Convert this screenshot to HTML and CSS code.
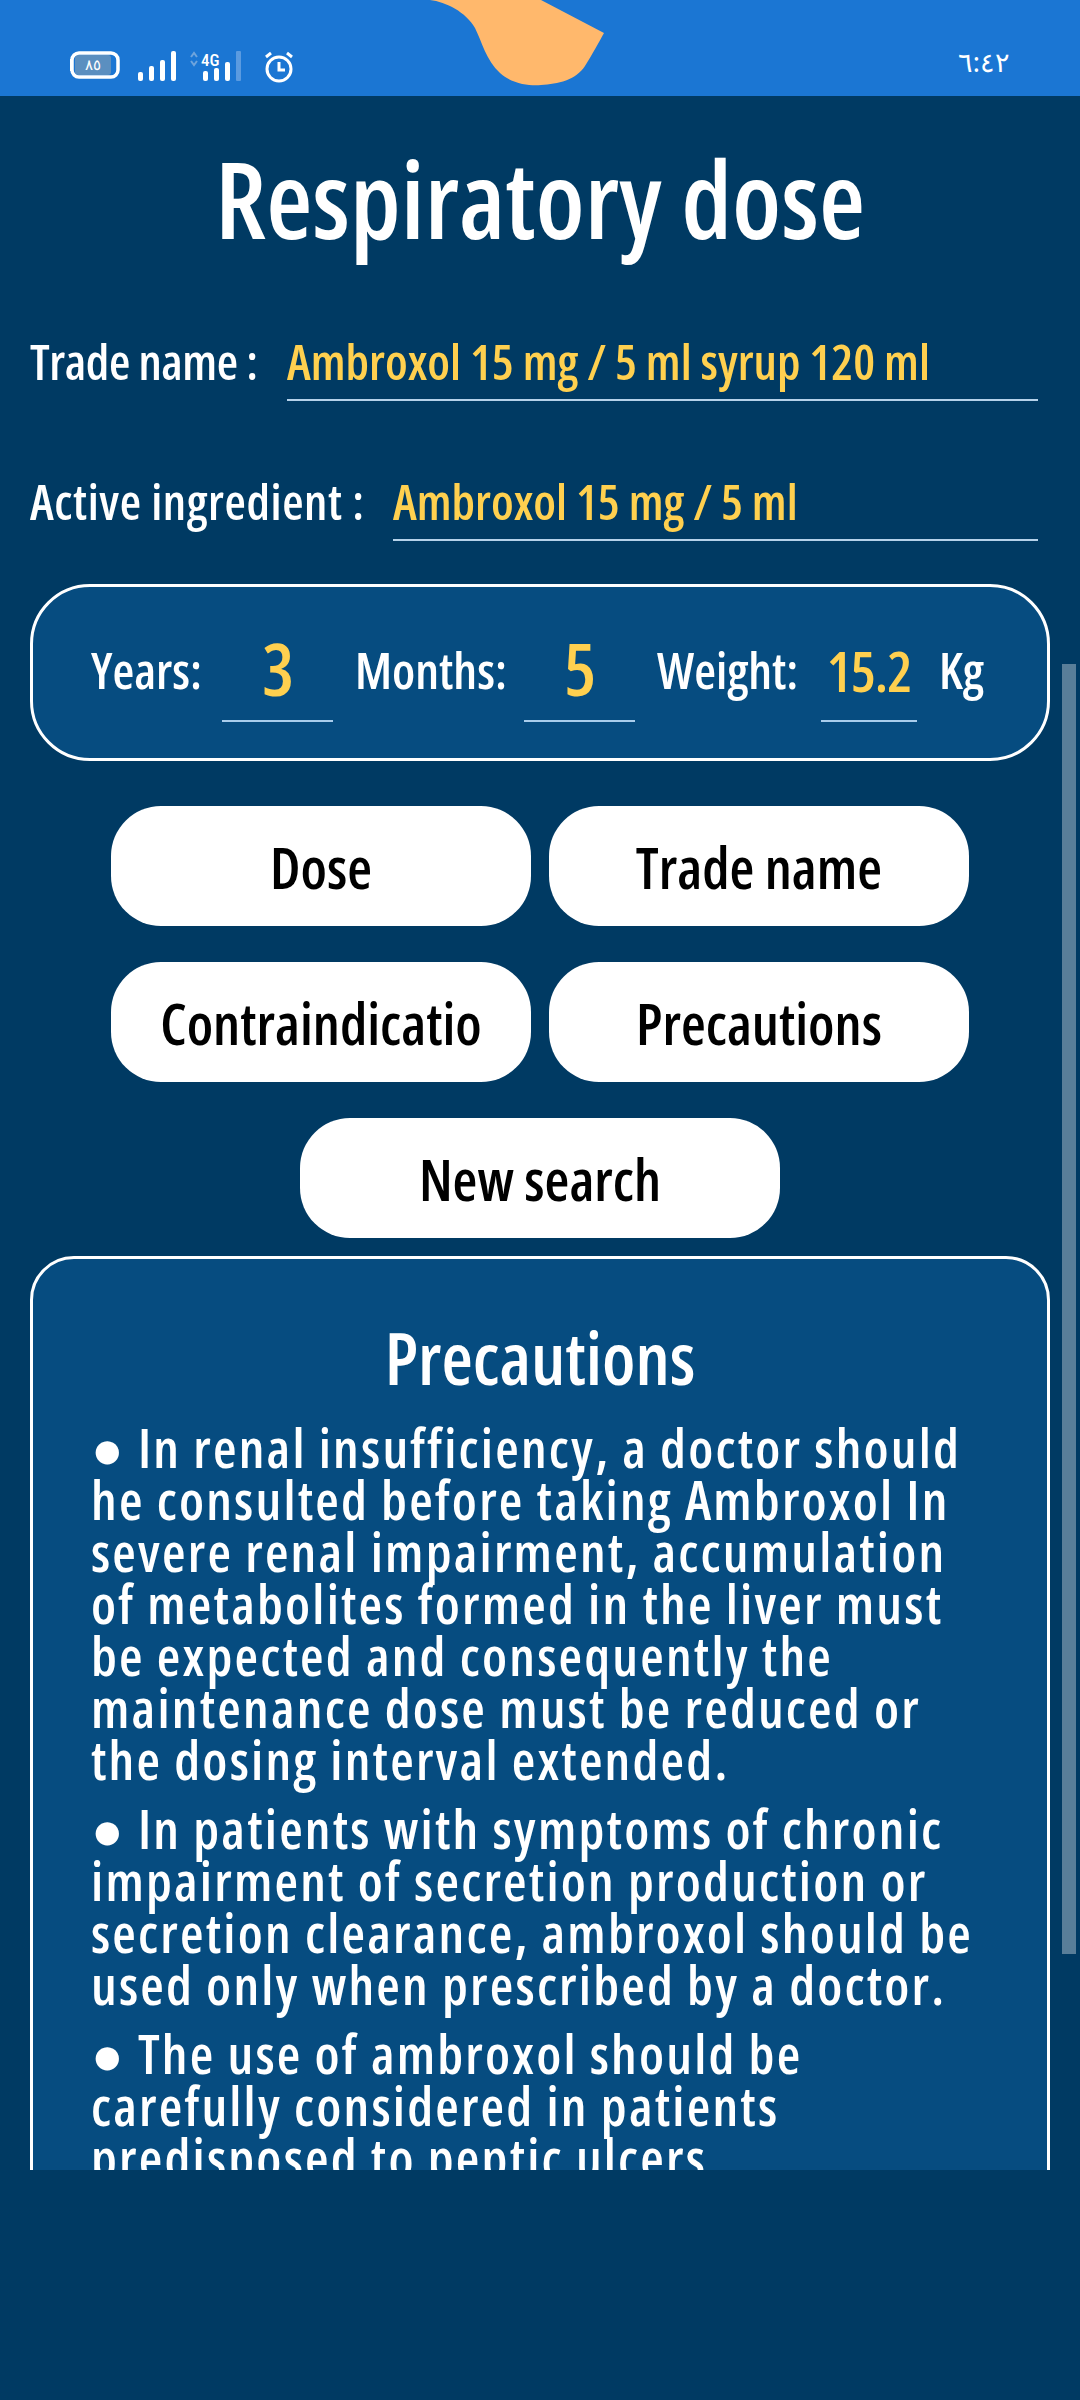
FILE: index.html
```html
<!DOCTYPE html>
<html>
<head>
	<title>Respiratory dose</title>
	<meta charset="utf-8">
	<link rel="stylesheet" href="styles.css">
</head>

<body>
	<div class="status">
		<svg class="blob" width="200" height="96" viewBox="0 0 200 96">
			<path d="M0 0 C16 2 36 12 45 28 C52 42 56 60 70 73 C82 84 100 86 111 85 C128 84 146 80 155 66 C162 55 169 42 174 33 L111 0 Z" fill="#ffb86c"/>
		</svg>
		<div class="status-left">
			<svg width="50" height="28" viewBox="0 0 50 28">
				<rect x="5" y="4" width="36" height="20" rx="3" fill="#5b8fc0"/>
				<rect x="2" y="2" width="46" height="24" rx="7" fill="none" stroke="#fff" stroke-width="3.5"/>
				<rect x="0" y="8" width="2" height="12" fill="#fff"/>
				<text x="23" y="19" class="batt" text-anchor="middle">٨٥</text>
			</svg>
			<svg class="sig" width="38" height="30" viewBox="0 0 38 30">
				<rect x="0" y="21" width="5" height="9" rx="2" fill="#fff"/>
				<rect x="11" y="15" width="5" height="15" rx="2" fill="#fff"/>
				<rect x="22" y="9" width="5" height="21" rx="2" fill="#fff"/>
				<rect x="33" y="0" width="5" height="30" rx="2" fill="#fff"/>
			</svg>
			<svg class="net" width="58" height="30" viewBox="0 0 58 30">
				<path d="M1 6 L4 2 L7 6 M1 10 L4 14 L7 10" fill="none" stroke="#6ea4dc" stroke-width="2"/>
				<text x="11" y="15" class="net-txt">4G</text>
				<rect x="13" y="20" width="5" height="10" rx="2" fill="#fff"/>
				<rect x="24" y="17" width="5" height="13" rx="2" fill="#fff"/>
				<rect x="35" y="11" width="5" height="19" rx="2" fill="#fff"/>
				<rect x="46" y="0" width="5" height="30" rx="1" fill="#5b9be0"/>
			</svg>
			<svg class="alarm" width="30" height="32" viewBox="0 0 30 32">
				<circle cx="15" cy="18" r="12" fill="none" stroke="#fff" stroke-width="3"/>
				<path d="M15 11 V19 H21" fill="none" stroke="#fff" stroke-width="3"/>
				<path d="M2 6 L7 2 M28 6 L23 2" fill="none" stroke="#fff" stroke-width="3"/>
			</svg>
		</div>
		<div class="time">٦:٤٢</div>
	</div>

	<div class="screen">
		<div class="scrollbar"></div>
		<h1 class="title">Respiratory dose</h1>

		<div class="field field-one">
			<span class="field-label">Trade name :</span>
			<span class="field-value">Ambroxol 15 mg / 5 ml syrup 120 ml</span>
		</div>
		<div class="field field-two">
			<span class="field-label">Active ingredient :</span>
			<span class="field-value">Ambroxol 15 mg / 5 ml</span>
		</div>

		<div class="card age-card">
			<span class="age-label lb-years">Years:</span>
			<span class="age-val big v-years">3</span>
			<span class="age-label lb-months">Months:</span>
			<span class="age-val big v-months">5</span>
			<span class="age-label lb-weight">Weight:</span>
			<span class="age-val v-weight">15.2</span>
			<span class="age-label lb-kg">Kg</span>
		</div>

		<div class="btn-row row-one">
			<button class="btn">Dose</button>
			<button class="btn">Trade name</button>
		</div>
		<div class="btn-row row-two">
			<button class="btn">Contraindicatio</button>
			<button class="btn">Precautions</button>
		</div>
		<div class="btn-row row-three">
			<button class="btn btn-new">New search</button>
		</div>

		<div class="card text-card">
			<h2 class="text-title">Precautions</h2>
			<p class="para">● In renal insufficiency, a doctor should<br>he consulted before taking Ambroxol In<br>severe renal impairment, accumulation<br>of metabolites formed in the liver must<br>be expected and consequently the<br>maintenance dose must be reduced or<br>the dosing interval extended.</p>
			<p class="para">● In patients with symptoms of chronic<br>impairment of secretion production or<br>secretion clearance, ambroxol should be<br>used only when prescribed by a doctor.</p>
			<p class="para">● The use of ambroxol should be<br>carefully considered in patients<br>predisposed to peptic ulcers.</p>
		</div>
	</div>
</body>
</html>
```

FILE: styles.css
```css
html, body {
	margin: 0;
	padding: 0;
}

body {
	width: 1080px;
	height: 2400px;
	overflow: hidden;
	background: #003a63;
	font-family: "Open Sans", "Noto Sans", sans-serif;
	font-stretch: 75%;
	color: #fff;
}

.status {
	position: relative;
	height: 96px;
	background: #1b76d3;
	display: flex;
	align-items: flex-start;
	justify-content: space-between;
	padding: 51px 70px 0 70px;
	box-sizing: border-box;
}

.blob {
	position: absolute;
	left: 430px;
	top: 0;
}

.status-left {
	display: flex;
	align-items: flex-start;
}

.sig {
	margin-left: 18px;
}

.net {
	margin-left: 14px;
}

.alarm {
	margin-left: 16px;
}

.batt {
	font-family: "Noto Sans", sans-serif;
	font-size: 15px;
	fill: #fff;
}

.net-txt {
	font-family: "Roboto", sans-serif;
	font-size: 17px;
	font-weight: 500;
	fill: #fff;
}

.time {
	font-family: "Noto Sans", sans-serif;
	font-size: 27px;
	line-height: 26px;
	margin-top: -2px;
	color: #fff;
}

.screen {
	position: relative;
	height: 2074px;
	overflow: hidden;
}

.scrollbar {
	position: absolute;
	left: 1062px;
	top: 568px;
	width: 14px;
	height: 1290px;
	background: rgba(255, 255, 255, 0.35);
}

.title {
	margin: 44px 0 0 0;
	text-align: center;
	font-size: 106px;
	line-height: 116px;
	font-weight: 600;
}

.field {
	display: flex;
	align-items: flex-end;
	margin-left: 30px;
	width: 1008px;
	font-size: 49px;
	line-height: 60px;
	font-weight: 600;
}

.field-one {
	margin-top: 75px;
}

.field-two {
	margin-top: 70px;
}

.field-one .field-label {
	width: 257px;
	letter-spacing: -0.4px;
}

.field-two .field-label {
	width: 363px;
	letter-spacing: 0.6px;
}

.field-value {
	flex: 1;
	color: #ffd04f;
	border-bottom: 2px solid #b5d2ea;
	padding-bottom: 8px;
}

.field-label {
	padding-bottom: 10px;
}

.card {
	background: #064c80;
	border: 3px solid #fff;
	box-sizing: border-box;
	margin-left: 30px;
	width: 1020px;
}

.age-card {
	height: 177px;
	margin-top: 43px;
	border-radius: 60px;
	display: flex;
	align-items: center;
	padding-left: 58px;
	font-size: 50px;
	font-weight: 600;
}

.age-label {
	margin-top: -6px;
}

.age-val {
	align-self: flex-start;
	margin-top: 37px;
	color: #ffd04f;
	text-align: center;
	border-bottom: 2px solid #a9cdec;
	box-sizing: border-box;
	height: 98px;
	font-size: 56px;
	letter-spacing: -1px;
	line-height: 92px;
	width: 111px;
}

.age-val.big {
	font-size: 72px;
	line-height: 88px;
}

.lb-years {
	width: 131px;
}

.lb-months {
	margin-left: 22px;
	width: 169px;
}

.lb-weight {
	margin-left: 22px;
	width: 164px;
}

.v-weight {
	width: 96px;
}

.lb-kg {
	margin-left: 22px;
}

.btn-row {
	display: flex;
	justify-content: center;
	gap: 18px;
}

.row-one {
	margin-top: 45px;
}

.row-two,
.row-three {
	margin-top: 36px;
}

.btn {
	width: 420px;
	height: 120px;
	background: #fff;
	border: none;
	border-radius: 50px;
	padding: 2px 0 0 0;
	color: #000;
	font-family: inherit;
	font-stretch: inherit;
	font-size: 57px;
	font-weight: 600;
}

.btn-new {
	width: 480px;
}

.text-card {
	margin-top: 18px;
	height: 1200px;
	border-radius: 44px;
	padding: 0 58px;
}

.text-title {
	margin: 58px 0 24px 0;
	text-align: center;
	font-size: 72px;
	line-height: 80px;
	font-weight: 600;
}

.para {
	margin: 17px 0 0 0;
	font-size: 54px;
	line-height: 52px;
	font-weight: 600;
	letter-spacing: 2.2px;
	white-space: nowrap;
}
```
